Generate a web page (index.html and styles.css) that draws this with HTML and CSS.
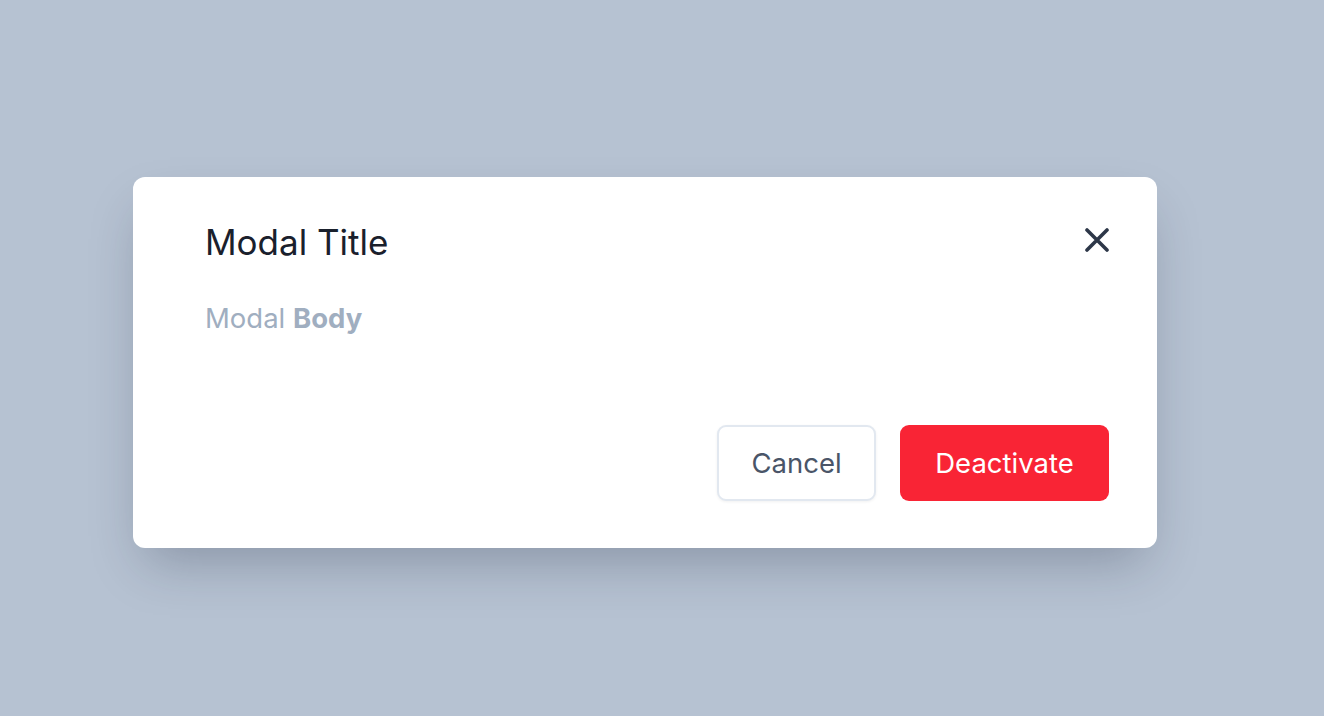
FILE: index.html
```html
<!DOCTYPE html>
<html lang="en">
<head>
<meta charset="utf-8">
<title>Modal</title>
<link rel="stylesheet" href="styles.css">
</head>
<body>
  <div class="stage">
    <div class="modal">
      <div class="modal-header">
        <h2 class="modal-title">Modal Title</h2>
        <button class="close-btn" aria-label="Close">
          <svg width="24" height="24" viewBox="0 0 24 24" fill="none" stroke="#2d3748" stroke-width="3.6" stroke-linecap="round">
            <path d="M2 2L22 22M22 2L2 22"/>
          </svg>
        </button>
      </div>
      <p class="modal-body">Modal <strong>Body</strong></p>
      <div class="modal-footer">
        <button class="btn btn-cancel">Cancel</button>
        <button class="btn btn-danger">Deactivate</button>
      </div>
    </div>
  </div>
</body>
</html>
```
FILE: styles.css
```css
* { box-sizing: border-box; }
html, body { margin: 0; padding: 0; }
body {
  background: #b6c2d2;
  font-family: Inter, "Noto Sans", sans-serif;
  height: 716px;
  overflow: hidden;
}
.stage {
  padding: 177px 0 0 133px;
}
.modal {
  width: 1024px;
  height: 371px;
  background: #fff;
  border-radius: 12px;
  box-shadow: 0 25px 50px -12px rgba(20, 30, 50, 0.28);
  padding: 38px 48px 47px 72px;
  display: flex;
  flex-direction: column;
}
.modal-header {
  display: flex;
  justify-content: space-between;
  align-items: center;
  height: 54px;
}
.modal-title {
  margin: 0;
  font-size: 35px;
  font-weight: 400;
  line-height: 54px;
  color: #1a202c;
}
.close-btn {
  border: 0;
  background: none;
  padding: 0;
  width: 24px;
  height: 24px;
  display: flex;
  margin-top: -4px;
}
.modal-body {
  margin: 27px 0 0;
  font-size: 27.5px;
  line-height: 45px;
  color: #a0aec0;
}
.modal-body strong { font-weight: 700; }
.modal-footer {
  margin-top: auto;
  display: flex;
  justify-content: flex-end;
  gap: 24px;
}
.btn {
  height: 76px;
  border-radius: 9px;
  font-family: Inter, "Noto Sans", sans-serif;
  font-size: 27.5px;
  padding: 0;
  text-align: center;
  cursor: pointer;
}
.btn-cancel {
  width: 159px;
  background: #fff;
  color: #4a5568;
  border: 2px solid #e2e8f0;
  box-shadow: 0 1px 3px rgba(0, 0, 0, 0.06);
}
.btn-danger {
  width: 209px;
  background: #f92435;
  color: #fff;
  border: 0;
}
```
